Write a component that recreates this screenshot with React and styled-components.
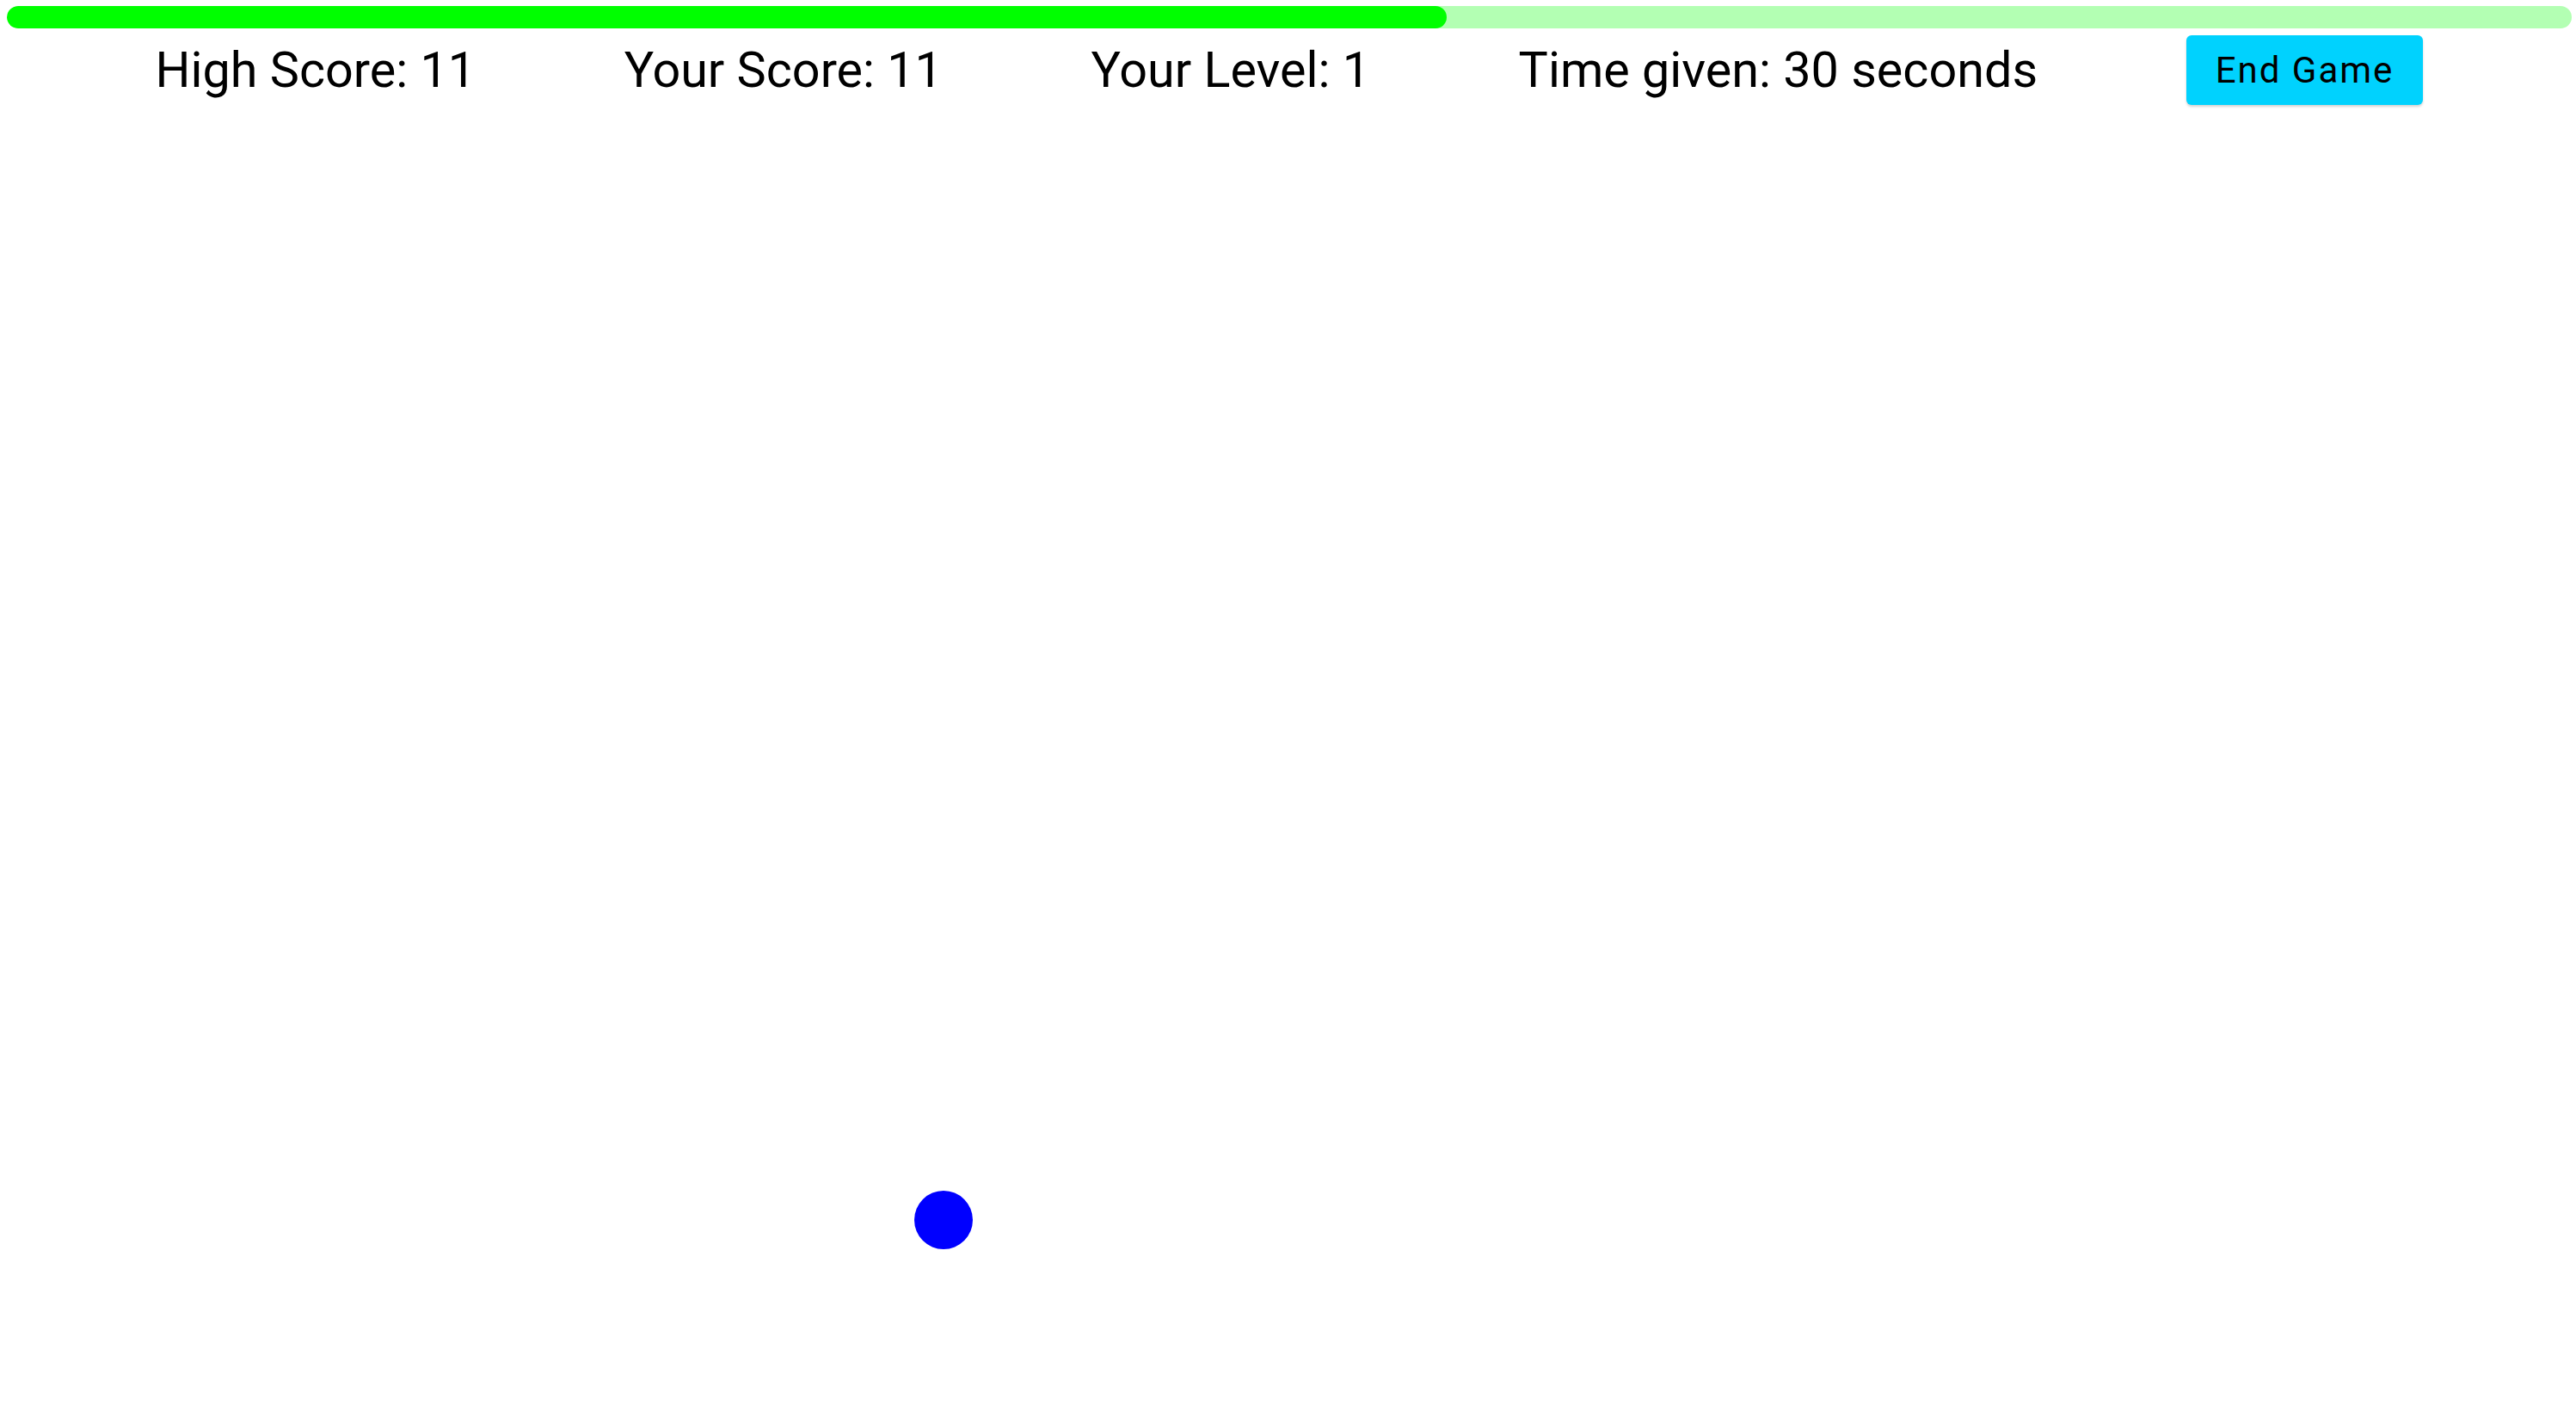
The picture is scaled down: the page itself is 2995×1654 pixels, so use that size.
import React from "react";
import styled, { createGlobalStyle } from "styled-components";

const GlobalStyle = createGlobalStyle`
  html, body {
    margin: 0;
    padding: 0;
    background: #ffffff;
    font-family: Roboto, "Liberation Sans", sans-serif;
  }
`;

const Page = styled.div`
  position: relative;
  width: 2995px;
  height: 1654px;
  padding: 7px 5px 0 8px;
  box-sizing: border-box;
  overflow: hidden;
`;

const Track = styled.div`
  height: 26px;
  border-radius: 13px;
  background: #b3ffb3;
  overflow: hidden;
`;

const Fill = styled.div`
  height: 100%;
  border-radius: 13px;
  background: #00ff00;
`;

const ScoreBar = styled.div`
  display: flex;
  align-items: center;
  justify-content: space-evenly;
  height: 81px;
  margin-top: 8px;
`;

const Stat = styled.span`
  font-size: 57.5px;
  font-weight: 400;
  color: #000000;
  white-space: nowrap;
  line-height: 1;
`;

const EndButton = styled.button`
  height: 81px;
  padding: 0 34px;
  border: none;
  border-radius: 6px;
  background: #00d2fe;
  color: #000000;
  font-family: Roboto, "Liberation Sans", sans-serif;
  font-size: 42px;
  letter-spacing: 2px;
  box-shadow: 0 2px 3px rgba(0, 0, 0, 0.18);
  cursor: pointer;
`;

const Ball = styled.div`
  position: absolute;
  width: 68px;
  height: 68px;
  border-radius: 50%;
  background: #0000ff;
`;

export default function App() {
  const progress = 0.5614;
  const stats = [
    "High Score: 11",
    "Your Score: 11",
    "Your Level: 1",
    "Time given: 30 seconds",
  ];

  return (
    <Page>
      <GlobalStyle />
      <Track>
        <Fill style={{ width: `${progress * 100}%` }} />
      </Track>
      <ScoreBar>
        {stats.map((s) => (
          <Stat key={s}>{s}</Stat>
        ))}
        <EndButton>End Game</EndButton>
      </ScoreBar>
      <Ball style={{ left: 1063, top: 1384 }} />
    </Page>
  );
}
